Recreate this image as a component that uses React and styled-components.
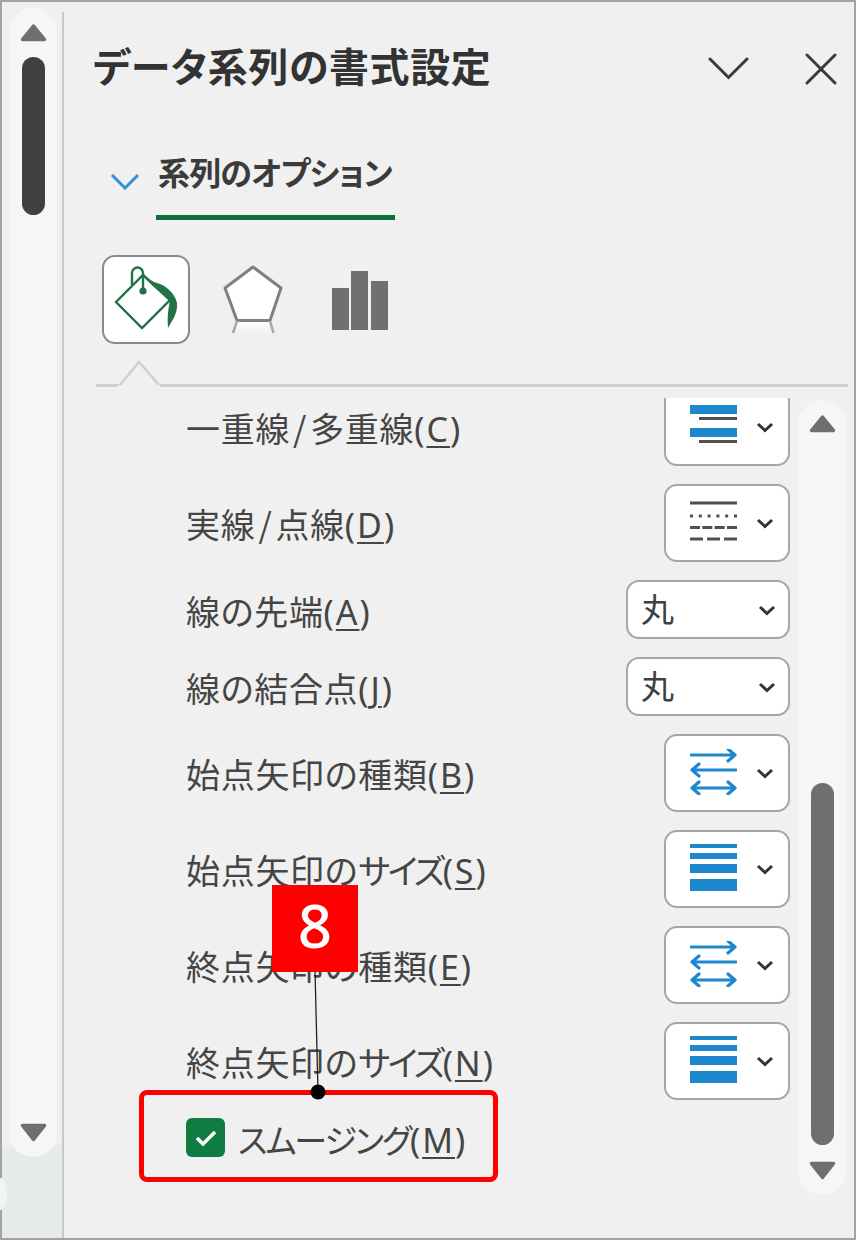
import React from 'react'
import styled, { createGlobalStyle } from 'styled-components'

const GlobalStyle = createGlobalStyle`
  html, body {
    margin: 0;
    padding: 0;
    background: #f0f0f0;
  }
  * {
    box-sizing: border-box;
  }
`

const Page = styled.div`
  position: relative;
  width: 856px;
  height: 1240px;
  overflow: hidden;
  font-family: 'Noto Sans CJK JP', 'Noto Sans', sans-serif;
  font-feature-settings: 'palt';
  color: #404040;
`

const Frame = styled.div`
  display: flex;
  width: 100%;
  height: 100%;
  background: #f0f0f0;
  border: 2px solid #a3a3a3;
`

const Rail = styled.div`
  position: relative;
  display: flex;
  flex: none;
  width: 62px;
  background: linear-gradient(#f1f0ef 92%, #e6eae8 93%);

  &::after {
    content: '';
    position: absolute;
    left: -8px;
    top: 1176px;
    width: 13px;
    height: 32px;
    border-radius: 50%;
    background: #f2f4f3;
  }
`

const RailDivider = styled.div`
  flex: none;
  width: 2px;
  margin: 10px 0 0 auto;
  background: #c9c9c9;
  order: 2;
`

const Track = styled.div`
  display: flex;
  flex: none;
  flex-direction: column;
  align-items: center;
  width: 48px;
  border-radius: 24px;
  background: #f6f6f6;
`

const RailTrack = styled(Track)`
  height: 1149px;
  margin: 6px 0 0 7px;
  padding: 15px 0;
`

const Arrow = styled.svg`
  flex: none;
  display: block;
  width: 27px;
  height: 19px;
  fill: #6f6f6f;
  stroke: #6f6f6f;
  stroke-width: 3.5;
  stroke-linejoin: round;
`

const Thumb = styled.div`
  flex: none;
  width: 23px;
  border-radius: 12px;
  background: ${(p) => p.$color};
`

const RailThumb = styled(Thumb)`
  height: 158px;
  margin-top: 15px;
  margin-bottom: auto;
`

const Main = styled.div`
  display: flex;
  flex: 1;
  flex-direction: column;
  min-width: 0;
`

const Header = styled.header`
  display: flex;
  flex: none;
  align-items: flex-start;
  height: 128px;
  padding: 33px 16px 0 29px;
`

const Title = styled.h1`
  flex: 1;
  margin: 0;
  font-size: 40px;
  line-height: 60px;
  font-weight: 700;
  color: #333;
  letter-spacing: 0.6px;
  white-space: nowrap;
`

const HeaderIcon = styled.svg`
  flex: none;
  display: block;
  fill: none;
  stroke: #3a3a3a;
  stroke-width: 3;
  stroke-linecap: round;
  margin-top: ${(p) => p.$top}px;
  margin-left: ${(p) => p.$left}px;
`

const SectionHead = styled.div`
  display: flex;
  flex: none;
  align-items: flex-start;
  height: 90px;
`

const SectionChevron = styled.svg`
  flex: none;
  display: block;
  margin: 42px 0 0 46px;
  fill: none;
  stroke: #2b93d8;
  stroke-width: 3;
`

const SectionTab = styled.div`
  width: 239px;
  height: 90px;
  margin-left: 16px;
  padding: 18px 0 0 2px;
  border-bottom: 5px solid #0f6e3b;
  font-size: 32px;
  line-height: 46px;
  font-weight: 700;
  color: #3b3b3b;
  letter-spacing: -0.8px;
  white-space: nowrap;
`

const IconTabs = styled.div`
  display: flex;
  flex: none;
  gap: 19px;
  margin: 35px 0 0 38px;
`

const IconTab = styled.div`
  display: flex;
  align-items: center;
  justify-content: center;
  width: 88px;
  height: 89px;
  border-radius: 13px;
  background: ${(p) => (p.$active ? '#fff' : 'transparent')};
  border: ${(p) => (p.$active ? '2px solid #8a8a8a' : 'none')};
`

const TabRule = styled.div`
  position: relative;
  flex: none;
  height: 3px;
  margin: 40px 6px 0 32px;
  background: #cfcfcf;
`

const Notch = styled.svg`
  position: absolute;
  left: 22px;
  bottom: 0;
  display: block;
`

const Body = styled.div`
  display: flex;
  flex: 1;
  min-height: 0;
  margin-top: 11px;
`

const List = styled.div`
  display: flex;
  flex: 1;
  flex-direction: column;
  gap: 18px;
  min-width: 0;
  height: 790px;
  padding: 0 0 0 122px;
  overflow: hidden;
`

const Row = styled.div`
  display: flex;
  flex: none;
  align-items: center;
  justify-content: space-between;
  height: ${(p) => (p.$short ? 59 : 78)}px;

  &:first-child {
    margin-top: -10px;
  }
`

const Label = styled.span`
  font-size: 34px;
  line-height: 46px;
  padding-top: 3px;
  color: #454545;
  letter-spacing: 0.7px;
  white-space: nowrap;
`

const Slash = styled.span`
  margin: 0 3px;
`

const Key = styled.span`
  font-family: 'Noto Sans', sans-serif;
  font-size: 34px;
  letter-spacing: 2px;

  u {
    text-underline-offset: 4px;
    text-decoration-thickness: 2px;
  }
`

const DropButton = styled.div`
  display: flex;
  flex: none;
  align-items: center;
  width: ${(p) => (p.$wide ? 164 : 126)}px;
  height: 100%;
  padding-left: ${(p) => (p.$wide ? 13 : 24)}px;
  background: #fff;
  border: 2px solid #a6a6a6;
  border-radius: 13px;
`

const DropIcon = styled.svg`
  flex: none;
  display: block;
  width: 47px;
  margin-bottom: ${(p) => p.$lift || 0}px;
`

const DropText = styled.span`
  font-size: 33px;
  line-height: 46px;
  padding-bottom: 4px;
  color: #404040;
`

const DropChevron = styled.svg`
  flex: none;
  display: block;
  margin-left: auto;
  margin-right: ${(p) => (p.$wide ? 12 : 14)}px;
  fill: none;
  stroke: #333;
  stroke-width: 3;
`

const CheckRow = styled.label`
  display: flex;
  flex: none;
  align-items: center;
  gap: 13px;
  height: 39px;
`

const CheckBox = styled.span`
  display: flex;
  flex: none;
  align-items: center;
  justify-content: center;
  width: 39px;
  height: 39px;
  border-radius: 6px;
  background: #107c41;
`

const CheckLabel = styled(Label)`
  padding-top: 4px;
  font-size: 33px;
  letter-spacing: 0;
`

const Kana = styled.span`
  letter-spacing: ${(p) => p.$tight}px;
`

const ScrollTrack = styled(Track)`
  height: 795px;
  margin: 2px 8px 0 8px;
  padding: 14px 0 15px;
`

const ScrollThumb = styled(Thumb)`
  height: 362px;
  margin-top: auto;
  margin-bottom: 16px;
`

const Callout = styled.div`
  position: absolute;
  left: 272px;
  top: 885px;
  display: flex;
  align-items: center;
  justify-content: center;
  width: 86px;
  height: 87px;
  padding-bottom: 8px;
  background: #ff0000;
  color: #fff;
  font-family: 'Noto Sans', sans-serif;
  font-size: 60px;
  font-weight: 500;
  line-height: 1;
`

const Highlight = styled.div`
  position: absolute;
  left: 139px;
  top: 1090px;
  width: 359px;
  height: 92px;
  border: 5px solid #ff0000;
  border-radius: 8px;
`

const Leader = styled.svg`
  position: absolute;
  left: 304px;
  top: 970px;
  display: block;
`

const BLUE = '#1e88cf'
const DARK = '#505050'

function ArrowUp() {
  return (
    <Arrow viewBox="0 0 27 19">
      <path d="M13.5 3 24.500 16.500H2.500z" />
    </Arrow>
  )
}

function ArrowDown() {
  return (
    <Arrow viewBox="0 0 27 19">
      <path d="M13.5 16.500 24.500 2.500H2.500z" />
    </Arrow>
  )
}

function BucketIcon() {
  return (
    <svg width="84" height="85" viewBox="2 2 84 85">
      <path d="M14 47 41 20l27 25-28 28z" fill="none" stroke="#217346" strokeWidth="2.4" />
      <path d="M30 30V18a5.500 5.500 0 0 1 11 0v18" fill="none" stroke="#217346" strokeWidth="2.4" />
      <circle cx="41" cy="36" r="3.600" fill="#217346" />
      <path d="M43 21c4 3 8 6 12 7 8 2 18 10 20 20 1 10-5 18-9 25-1-10 0-18 2-28-6-6-12-9-18-15z" fill="#217346" />
    </svg>
  )
}

function PentagonIcon() {
  return (
    <svg width="64" height="74" viewBox="0 0 64 74">
      <defs>
        <linearGradient id="pentagonFade" x1="0" y1="0" x2="0" y2="1">
          <stop offset="0" stopColor="#fff" />
          <stop offset="1" stopColor="#f0f0f0" />
        </linearGradient>
      </defs>
      <path d="M16 57.500h33l3 13H12z" fill="url(#pentagonFade)" />
      <path d="M32 4 60 25 49 57.500H16L4 25z" fill="#fff" stroke="#808080" strokeWidth="3" strokeLinejoin="round" />
      <path d="M16 58l-4 12M49 58l3.500 12" stroke="#a8a8a8" strokeWidth="2.500" />
    </svg>
  )
}

function BarsIcon() {
  return (
    <svg width="56" height="60" viewBox="0 0 56 60" fill="#707070">
      <rect x="0" y="18" width="17" height="42" />
      <rect x="19" y="1" width="17" height="59" />
      <rect x="39" y="11" width="17" height="49" />
    </svg>
  )
}

function CompoundIcon() {
  return (
    <DropIcon $lift={4} height="40" viewBox="0 0 47 40">
      <rect x="0" y="0" width="47" height="9" fill={BLUE} />
      <rect x="9" y="12" width="38" height="3" fill={DARK} />
      <rect x="0" y="23" width="47" height="9" fill={BLUE} />
      <rect x="9" y="35" width="38" height="3" fill={DARK} />
    </DropIcon>
  )
}

function DashIcon() {
  return (
    <DropIcon $lift={4} height="40" viewBox="0 0 47 40" stroke={DARK} strokeWidth="3">
      <path d="M0 2h47" />
      <path d="M0 15h47" strokeDasharray="3 5.800" />
      <path d="M0 26.500h47" strokeDasharray="10 2.330" />
      <path d="M0 38h47" strokeDasharray="13 4" />
    </DropIcon>
  )
}

function ArrowsIcon() {
  return (
    <DropIcon $lift={2} height="46" viewBox="0 0 47 46" fill="none" stroke={BLUE} strokeWidth="3.200" strokeLinecap="round" strokeLinejoin="round">
      <path d="M1 6h44M38 0l7 6-7 6" />
      <path d="M46 21H2M9 15l-7 6 7 6" />
      <path d="M3 39h41M9 33l-7 6 7 6M38 33l7 6-7 6" />
    </DropIcon>
  )
}

function WeightIcon() {
  return (
    <DropIcon $lift={4} height="47" viewBox="0 0 47 47" fill={BLUE}>
      <rect x="0" y="0" width="47" height="4" />
      <rect x="0" y="9" width="47" height="6" />
      <rect x="0" y="20" width="47" height="9" />
      <rect x="0" y="35" width="47" height="12" />
    </DropIcon>
  )
}

function Chevron({ wide }) {
  return (
    <DropChevron $wide={wide} width="18" height="12" viewBox="0 0 18 12">
      <path d="M2 3l7 6.500L16 3" />
    </DropChevron>
  )
}

const rows = [
  { label: <>一重線<Slash>/</Slash>多重線</>, key: 'C', icon: <CompoundIcon /> },
  { label: <>実線<Slash>/</Slash>点線</>, key: 'D', icon: <DashIcon /> },
  { label: '線の先端', key: 'A', text: '丸' },
  { label: '線の結合点', key: 'J', text: '丸' },
  { label: '始点矢印の種類', key: 'B', icon: <ArrowsIcon /> },
  { label: <>始点矢印の<Kana $tight={-2.7}>サイズ</Kana></>, key: 'S', icon: <WeightIcon /> },
  { label: '終点矢印の種類', key: 'E', icon: <ArrowsIcon /> },
  { label: <>終点矢印の<Kana $tight={-2.7}>サイズ</Kana></>, key: 'N', icon: <WeightIcon /> },
]

export default function App() {
  return (
    <Page>
      <GlobalStyle />
      <Frame>
        <Rail>
          <RailDivider />
          <RailTrack>
            <ArrowUp />
            <RailThumb $color="#404040" />
            <ArrowDown />
          </RailTrack>
        </Rail>
        <Main>
          <Header>
            <Title>データ系列の書式設定</Title>
            <HeaderIcon $top={21} $left={0} width="42" height="25" viewBox="0 0 42 25">
              <path d="M3 3l18.500 18.500L40 3" />
            </HeaderIcon>
            <HeaderIcon $top={17} $left={55} width="34" height="34" viewBox="0 0 34 34">
              <path d="M3 3l28 28M31 3L3 31" />
            </HeaderIcon>
          </Header>
          <SectionHead>
            <SectionChevron width="30" height="18" viewBox="0 0 30 18">
              <path d="M2 3l13 13L28 3" />
            </SectionChevron>
            <SectionTab>系列のオプション</SectionTab>
          </SectionHead>
          <IconTabs>
            <IconTab $active>
              <BucketIcon />
            </IconTab>
            <IconTab>
              <PentagonIcon />
            </IconTab>
            <IconTab>
              <BarsIcon />
            </IconTab>
          </IconTabs>
          <TabRule>
            <Notch width="42" height="28" viewBox="0 0 42 28">
              <path d="M0 26h2L21 3l20 23h1V28H0z" fill="#f0f0f0" />
              <path d="M2 26 21 3l20 23" fill="none" stroke="#cfcfcf" strokeWidth="2.500" />
            </Notch>
          </TabRule>
          <Body>
            <List>
              {rows.map((row) => (
                <Row key={row.key} $short={!!row.text}>
                  <Label>
                    {row.label}
                    <Key>
                      (<u>{row.key}</u>)
                    </Key>
                  </Label>
                  <DropButton $wide={!!row.text}>
                    {row.text ? <DropText>{row.text}</DropText> : row.icon}
                    <Chevron wide={!!row.text} />
                  </DropButton>
                </Row>
              ))}
              <CheckRow>
                <CheckBox>
                  <svg width="24" height="20" viewBox="0 0 24 20" fill="none" stroke="#fff" strokeWidth="3.500">
                    <path d="M3 10l6 6L21 4" />
                  </svg>
                </CheckBox>
                <CheckLabel>
                  <Kana $tight={-2}>スムージング</Kana>
                  <Key>
                    (<u>M</u>)
                  </Key>
                </CheckLabel>
              </CheckRow>
            </List>
            <ScrollTrack>
              <ArrowUp />
              <ScrollThumb $color="#6f6f6f" />
              <ArrowDown />
            </ScrollTrack>
          </Body>
        </Main>
      </Frame>
      <Highlight />
      <Leader width="24" height="132" viewBox="0 0 24 132">
        <path d="M11 0l3 122" stroke="#222" strokeWidth="1.300" fill="none" />
        <circle cx="14" cy="122" r="7.500" fill="#000" />
      </Leader>
      <Callout>8</Callout>
    </Page>
  )
}
